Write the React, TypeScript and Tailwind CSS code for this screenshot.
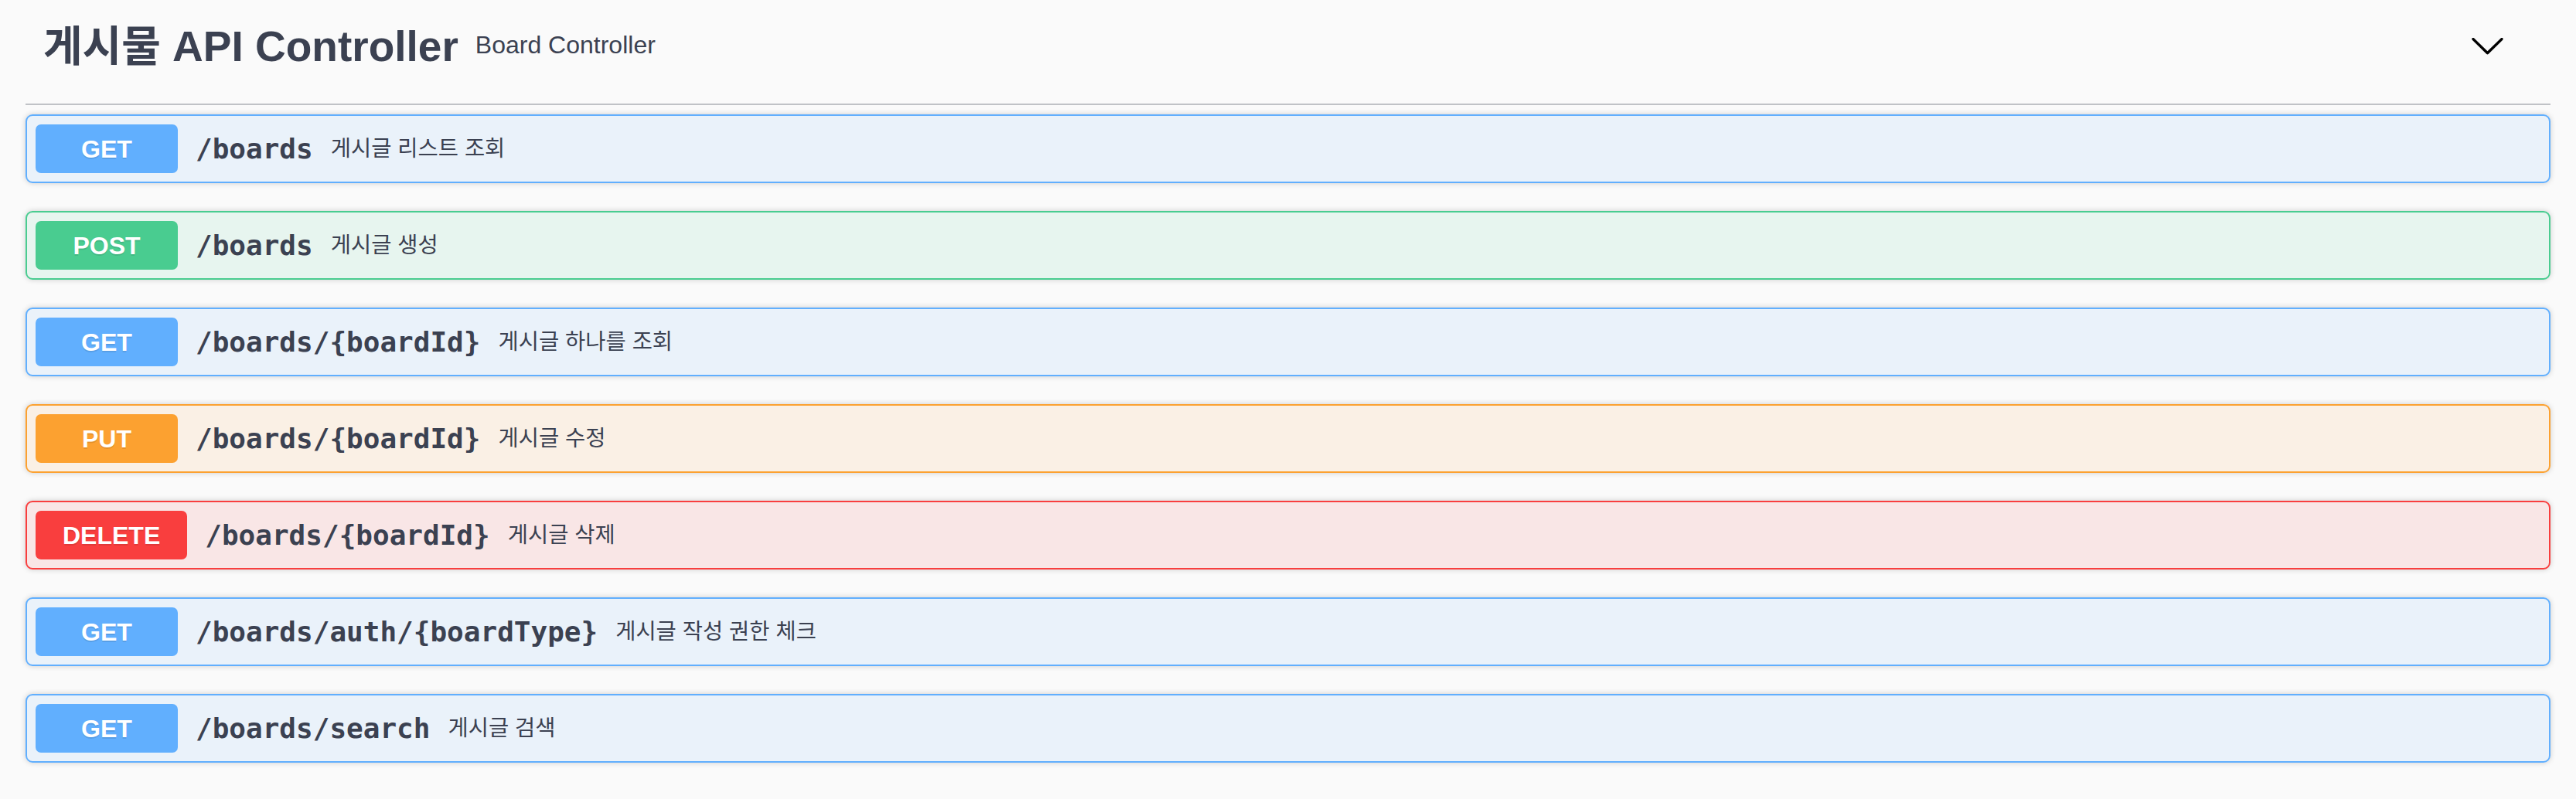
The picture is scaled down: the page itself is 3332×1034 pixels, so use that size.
import React from "react";

type Method = "GET" | "POST" | "PUT" | "DELETE";

interface Operation {
    method: Method;
    path: string;
    summary: string;
}

const operations: Operation[] = [
    { method: "GET", path: "/boards", summary: "게시글 리스트 조회" },
    { method: "POST", path: "/boards", summary: "게시글 생성" },
    { method: "GET", path: "/boards/{boardId}", summary: "게시글 하나를 조회" },
    { method: "PUT", path: "/boards/{boardId}", summary: "게시글 수정" },
    { method: "DELETE", path: "/boards/{boardId}", summary: "게시글 삭제" },
    { method: "GET", path: "/boards/auth/{boardType}", summary: "게시글 작성 권한 체크" },
    { method: "GET", path: "/boards/search", summary: "게시글 검색" },
];

// block + badge colours per http method (swagger-ui palette)
const methodStyles: Record<Method, { block: string; badge: string }> = {
    GET: {
        block: "border-[#61affe] bg-[rgba(97,175,254,0.1)]",
        badge: "bg-[#61affe]",
    },
    POST: {
        block: "border-[#49cc90] bg-[rgba(73,204,144,0.1)]",
        badge: "bg-[#49cc90]",
    },
    PUT: {
        block: "border-[#fca130] bg-[rgba(252,161,48,0.1)]",
        badge: "bg-[#fca130]",
    },
    DELETE: {
        block: "border-[#f93e3e] bg-[rgba(249,62,62,0.1)]",
        badge: "bg-[#f93e3e]",
    },
};

const sans = "font-['Liberation_Sans','Noto_Sans_CJK_KR',sans-serif]";

const OpBlock: React.FC<{ op: Operation }> = ({ op }) => {
    const style = methodStyles[op.method];
    return (
        <div
            className={`mb-[36px] rounded-[9px] border-2 shadow-[0_0_7px_rgba(0,0,0,0.19)] ${style.block}`}
        >
            <div className="flex items-center p-[11px]">
                {/* Method badge */}
                <span
                    className={`flex h-[63px] min-w-[184px] items-center justify-center rounded-[7px] px-[35px] text-[32px] font-bold text-white [text-shadow:0_2px_0_rgba(0,0,0,0.1)] ${sans} ${style.badge}`}
                >
                    {op.method}
                </span>

                {/* Path */}
                <span className="px-[23px] font-['DejaVu_Sans_Mono',monospace] text-[36px] font-bold text-[#3b4151]">
                    {op.path}
                </span>

                {/* Summary */}
                <div className={`flex-1 text-[28.5px] text-[#3b4151] ${sans}`}>
                    {op.summary}
                </div>
            </div>
        </div>
    );
};

const App: React.FC = () => {
    return (
        <div className="min-h-screen bg-[#fafafa] px-[33px]">
            {/* Tag header */}
            <div className="border-b-2 border-[rgba(59,65,81,0.3)] pb-[18px]">
                <div className="flex h-[116px] items-center pl-[23px] pr-[58px] text-[#3b4151]">
                    <h4 className={`pt-[4px] text-[55px] font-bold leading-none ${sans}`}>
                        게시물 API Controller
                    </h4>
                    <small className={`flex-1 pl-[22px] text-[32px] font-normal ${sans}`}>
                        Board Controller
                    </small>
                    <svg width="47" height="47" viewBox="0 0 20 20" fill="#000">
                        <path d="M17.418 6.109c.272-.268.709-.268.979 0s.271.701 0 .969l-7.908 7.83c-.27.268-.707.268-.979 0l-7.908-7.83c-.27-.268-.27-.701 0-.969.271-.268.709-.268.979 0L10 13.25l7.418-7.141z" />
                    </svg>
                </div>
            </div>

            {/* Operations */}
            <div className="pt-[12px]">
                {operations.map((op, index) => (
                    <OpBlock key={index} op={op} />
                ))}
            </div>
        </div>
    );
};

export default App;
